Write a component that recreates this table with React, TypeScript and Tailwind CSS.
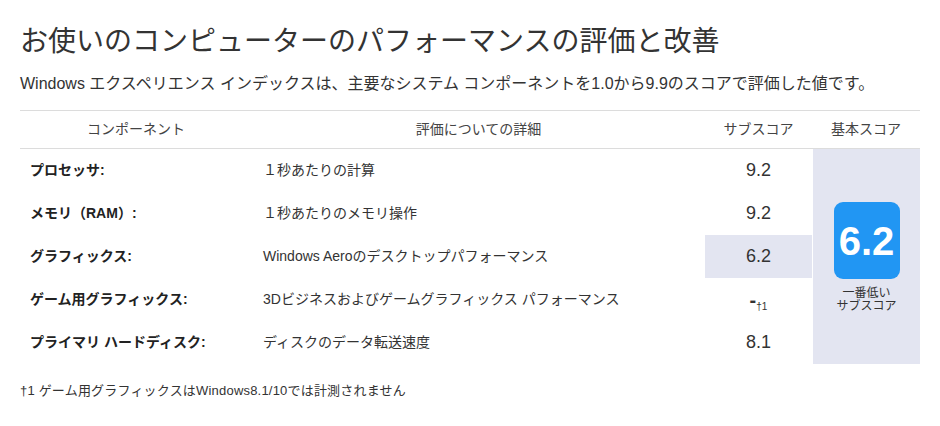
import React from "react";

interface ScoreRow {
  label: string;
  detail: string;
  score: string;
  lowest?: boolean;
  note?: boolean;
}

const rows: ScoreRow[] = [
  { label: "プロセッサ:", detail: "１秒あたりの計算", score: "9.2" },
  { label: "メモリ（RAM）:", detail: "１秒あたりのメモリ操作", score: "9.2" },
  { label: "グラフィックス:", detail: "Windows Aeroのデスクトップパフォーマンス", score: "6.2", lowest: true },
  { label: "ゲーム用グラフィックス:", detail: "3Dビジネスおよびゲームグラフィックス パフォーマンス", score: "-", note: true },
  { label: "プライマリ ハードディスク:", detail: "ディスクのデータ転送速度", score: "8.1" },
];

const App = () => {
  return (
    <div
      className="bg-white w-[940px] h-[426px] px-5 pt-6 text-[#333]"
      style={{ fontFamily: '"Liberation Sans", Arial, "Noto Sans CJK JP", sans-serif' }}
    >
      <h1 className="text-[28px] leading-[36px] font-normal">
        お使いのコンピューターのパフォーマンスの評価と改善
      </h1>
      <p className="mt-3 text-[16px] leading-[24px]">
        Windows エクスペリエンス インデックスは、主要なシステム コンポーネントを1.0から9.9のスコアで評価した値です。
      </p>

      <div className="mt-[14px] w-[900px]">
        {/* header */}
        <div className="grid grid-cols-[232px_453px_107px_108px] h-[39px] border-t border-b border-[#dcdcdc] text-[14px] text-[#444] items-center text-center">
          <span>コンポーネント</span>
          <span>評価についての詳細</span>
          <span>サブスコア</span>
          <span>基本スコア</span>
        </div>

        {/* body */}
        <div className="grid grid-cols-[232px_453px_107px_108px] grid-rows-[repeat(5,43px)]">
          {rows.map((row, i) => (
            <React.Fragment key={row.label}>
              <div
                className="flex items-center pl-[10px] text-[14px] font-bold text-[#222]"
                style={{ gridRow: i + 1, gridColumn: 1 }}
              >
                {row.label}
              </div>
              <div
                className="flex items-center pl-[11px] text-[14px] text-[#333]"
                style={{ gridRow: i + 1, gridColumn: 2 }}
              >
                {row.detail}
              </div>
              <div
                className={
                  "flex items-center justify-center text-[18px] text-[#333] " +
                  (row.lowest ? "bg-[#e3e5f1]" : "")
                }
                style={{ gridRow: i + 1, gridColumn: 3 }}
              >
                {row.note ? (
                  <span className="flex items-end">
                    <span className="font-bold text-[20px] leading-none">-</span>
                    <span className="text-[10px] leading-none mb-[-2px]">†1</span>
                  </span>
                ) : (
                  row.score
                )}
              </div>
            </React.Fragment>
          ))}

          <div className="col-start-4 row-start-1 row-span-5 bg-[#e3e5f1] border-l border-white flex flex-col items-center justify-center pt-[2px]">
            <div className="w-[66px] h-[77px] rounded-[9px] bg-[#2196f3] flex items-center justify-center">
              <span className="text-white font-bold text-[40px] leading-none">6.2</span>
            </div>
            <div className="mt-[8px] text-[12px] leading-[13px] text-center text-[#333]">
              一番低い
              <br />
              サブスコア
            </div>
          </div>
        </div>
      </div>

      <p className="mt-[17px] text-[13px] leading-[20px] tracking-[0.2px]">
        †1 ゲーム用グラフィックスはWindows8.1/10では計測されません
      </p>
    </div>
  );
};

export default App;
